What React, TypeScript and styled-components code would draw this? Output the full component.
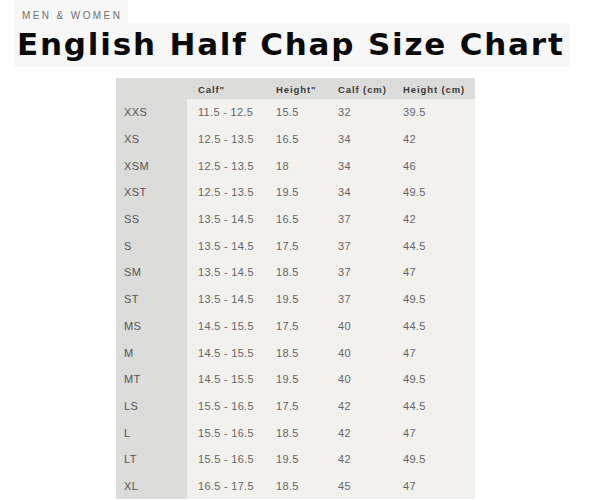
import React from "react";
import styled, { createGlobalStyle } from "styled-components";

const Global = createGlobalStyle`
  html, body { margin: 0; padding: 0; background: #ffffff; }
  body { font-family: "Liberation Sans", Arial, sans-serif; }
`;

const Page = styled.div`
  width: 600px;
  height: 500px;
  overflow: hidden;
  display: flex;
  flex-direction: column;
  align-items: flex-start;
`;

const Kicker = styled.div`
  margin-left: 14px;
  width: 114px;
  height: 23px;
  box-sizing: border-box;
  padding: 10px 0 0 8px;
  background: #f7f7f7;
  color: #6f6f6f;
  font-size: 10px;
  line-height: 11px;
  letter-spacing: 2.4px;
  white-space: nowrap;
`;

const Title = styled.h1`
  margin: 0 0 0 14px;
  width: 556px;
  height: 44px;
  box-sizing: border-box;
  padding: 0 0 0 3px;
  background: #f7f7f7;
  color: #0a0a0a;
  font-family: "DejaVu Sans", "Liberation Sans", sans-serif;
  font-weight: 700;
  font-size: 31px;
  line-height: 43px;
  letter-spacing: 1.8px;
  white-space: nowrap;
`;

const Table = styled.div`
  margin: 11px 0 0 116px;
  width: 359px;
  display: grid;
  grid-template-columns: 71px 78px 62px 65px 83px;
  grid-auto-rows: 26.7px;
  grid-template-rows: 21px;
  background: #f2f1ee;
`;

const HeadCell = styled.div`
  background: #dcdcda;
  color: #3a3a3a;
  font-weight: 700;
  font-size: 9.5px;
  letter-spacing: 0.9px;
  display: flex;
  align-items: center;
  padding-left: 11px;
  padding-top: 2px;
  box-sizing: border-box;
  white-space: nowrap;
`;

const SizeCell = styled.div`
  background: #dcdcda;
  color: #555555;
  font-size: 11px;
  letter-spacing: 0.4px;
  display: flex;
  align-items: center;
  padding-left: 8px;
  box-sizing: border-box;
`;

const Cell = styled.div`
  color: #666666;
  font-size: 11px;
  letter-spacing: 0.3px;
  display: flex;
  align-items: center;
  padding-left: 11px;
  box-sizing: border-box;
  white-space: nowrap;
`;

const headers = ["", "Calf\"", "Height\"", "Calf (cm)", "Height (cm)"];

const rows: string[][] = [
  ["XXS", "11.5 - 12.5", "15.5", "32", "39.5"],
  ["XS", "12.5 - 13.5", "16.5", "34", "42"],
  ["XSM", "12.5 - 13.5", "18", "34", "46"],
  ["XST", "12.5 - 13.5", "19.5", "34", "49.5"],
  ["SS", "13.5 - 14.5", "16.5", "37", "42"],
  ["S", "13.5 - 14.5", "17.5", "37", "44.5"],
  ["SM", "13.5 - 14.5", "18.5", "37", "47"],
  ["ST", "13.5 - 14.5", "19.5", "37", "49.5"],
  ["MS", "14.5 - 15.5", "17.5", "40", "44.5"],
  ["M", "14.5 - 15.5", "18.5", "40", "47"],
  ["MT", "14.5 - 15.5", "19.5", "40", "49.5"],
  ["LS", "15.5 - 16.5", "17.5", "42", "44.5"],
  ["L", "15.5 - 16.5", "18.5", "42", "47"],
  ["LT", "15.5 - 16.5", "19.5", "42", "49.5"],
  ["XL", "16.5 - 17.5", "18.5", "45", "47"],
];

export default function App() {
  return (
    <Page>
      <Global />
      <Kicker>MEN &amp; WOMEN</Kicker>
      <Title>English Half Chap Size Chart</Title>
      <Table>
        {headers.map((h, i) => (
          <HeadCell key={"h" + i}>{h}</HeadCell>
        ))}
        {rows.map((r) => (
          <React.Fragment key={r[0]}>
            <SizeCell>{r[0]}</SizeCell>
            {r.slice(1).map((v, j) => (
              <Cell key={j}>{v}</Cell>
            ))}
          </React.Fragment>
        ))}
      </Table>
    </Page>
  );
}
